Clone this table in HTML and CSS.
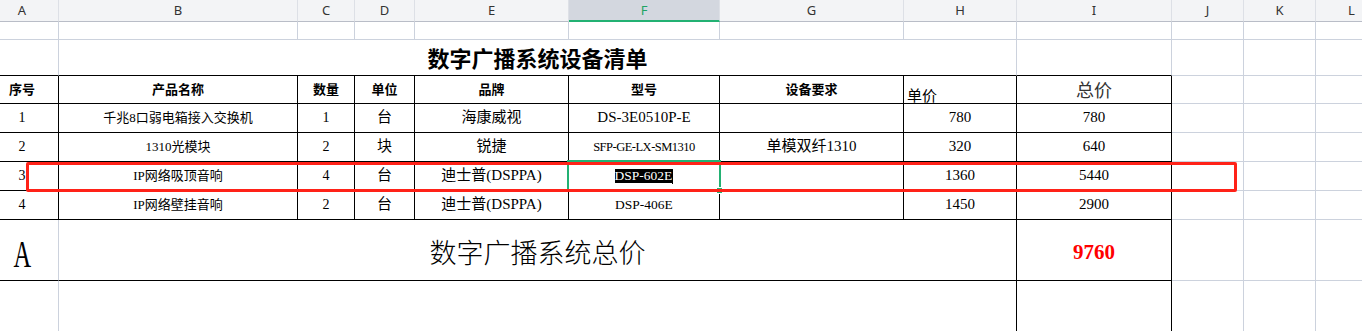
FILE: index.html
```html
<!DOCTYPE html>
<html lang="zh-CN">
<head>
<meta charset="utf-8">
<title>数字广播系统设备清单</title>
<link rel="stylesheet" href="styles.css">
</head>
<body>
<div class="sheet">
  <!-- column headers -->
  <div class="ch">A</div>
  <div class="ch">B</div>
  <div class="ch">C</div>
  <div class="ch">D</div>
  <div class="ch">E</div>
  <div class="ch ch-sel">F</div>
  <div class="ch">G</div>
  <div class="ch">H</div>
  <div class="ch">I</div>
  <div class="ch">J</div>
  <div class="ch">K</div>
  <div class="ch">L</div>

  <!-- row 1 -->
  <div class="c"></div><div class="c"></div><div class="c"></div><div class="c"></div>
  <div class="c"></div><div class="c"></div><div class="c"></div><div class="c"></div>
  <div class="c"></div><div class="c"></div><div class="c"></div><div class="c"></div>

  <!-- row 2: title -->
  <div class="c bb"></div>
  <div class="c bb span7 title">数字广播系统设备清单</div>
  <div class="c bb"></div>
  <div class="c"></div><div class="c"></div><div class="c"></div>

  <!-- row 3: table header -->
  <div class="c b colA th">序号</div>
  <div class="c b th">产品名称</div>
  <div class="c b th">数量</div>
  <div class="c b th">单位</div>
  <div class="c b th">品牌</div>
  <div class="c b th">型号</div>
  <div class="c b th">设备要求</div>
  <div class="c b th-unit">单价</div>
  <div class="c b th-total">总价</div>
  <div class="c"></div><div class="c"></div><div class="c"></div>

  <!-- row 4 -->
  <div class="c b colA f14">1</div>
  <div class="c b f13">千兆8口弱电箱接入交换机</div>
  <div class="c b f14">1</div>
  <div class="c b f15">台</div>
  <div class="c b f15">海康威视</div>
  <div class="c b f15">DS-3E0510P-E</div>
  <div class="c b"></div>
  <div class="c b f15">780</div>
  <div class="c b f15">780</div>
  <div class="c"></div><div class="c"></div><div class="c"></div>

  <!-- row 5 -->
  <div class="c b colA f14">2</div>
  <div class="c b f13">1310光模块</div>
  <div class="c b f14">2</div>
  <div class="c b f15">块</div>
  <div class="c b f15">锐捷</div>
  <div class="c b f-tight">SFP-GE-LX-SM1310</div>
  <div class="c b f15">单模双纤1310</div>
  <div class="c b f15">320</div>
  <div class="c b f15">640</div>
  <div class="c"></div><div class="c"></div><div class="c"></div>

  <!-- row 6 -->
  <div class="c b colA f14">3</div>
  <div class="c b f13">IP网络吸顶音响</div>
  <div class="c b f14">4</div>
  <div class="c b f15">台</div>
  <div class="c b f15">迪士普(DSPPA)</div>
  <div class="c b f135"><span class="hl">DSP-602E</span><span class="caret"></span></div>
  <div class="c b"></div>
  <div class="c b f15">1360</div>
  <div class="c b f15">5440</div>
  <div class="c"></div><div class="c"></div><div class="c"></div>

  <!-- row 7 -->
  <div class="c b colA f14">4</div>
  <div class="c b f13">IP网络壁挂音响</div>
  <div class="c b f14">2</div>
  <div class="c b f15">台</div>
  <div class="c b f15">迪士普(DSPPA)</div>
  <div class="c b f135">DSP-406E</div>
  <div class="c b"></div>
  <div class="c b f15">1450</div>
  <div class="c b f15">2900</div>
  <div class="c"></div><div class="c"></div><div class="c"></div>

  <!-- row 8: total -->
  <div class="c bb colA big-a"><span class="a-glyph">A</span></div>
  <div class="c b span7 total-label">数字广播系统总价</div>
  <div class="c b total-value">9760</div>
  <div class="c"></div><div class="c"></div><div class="c"></div>

  <!-- row 9 -->
  <div class="c"></div>
  <div class="c br span7"></div>
  <div class="c br"></div>
  <div class="c"></div><div class="c"></div><div class="c"></div>

  <!-- overlays -->
  <div class="cell-selection"><span class="fill-handle"></span></div>
  <div class="red-mark"></div>
</div>
</body>
</html>
```

FILE: styles.css
```css
html, body {
  margin: 0;
  padding: 0;
  background: #ffffff;
  overflow: hidden;
}

body {
  width: 1362px;
  height: 331px;
}

.sheet {
  position: relative;
  display: grid;
  grid-template-columns: 59px 239px 57px 60px 154px 151px 184px 113px 155px 72px 72px 72px;
  grid-template-rows: 22px 18px 36px 28px 29px 29px 29px 29px 61px 60px;
  width: 1388px;
  font-family: "Liberation Serif", "Noto Sans CJK SC", serif;
  color: #000;
}

/* column header strip */
.ch {
  box-sizing: border-box;
  background: #f3f4f6;
  border-right: 1px solid #dde0e6;
  border-bottom: 1px solid #b9bdc7;
  display: flex;
  align-items: center;
  justify-content: center;
  font-family: "Noto Sans", "Liberation Sans", sans-serif;
  font-size: 13px;
  color: #333;
  line-height: 1;
}

.ch:first-child {
  padding-right: 14px;
}

.ch-sel {
  background: #d3d7df;
  color: #1fa463;
  border-bottom: 2px solid #23b173;
}

/* grid cells */
.c {
  box-sizing: border-box;
  border-right: 1px solid #ccd2dd;
  border-bottom: 1px solid #ccd2dd;
  display: flex;
  align-items: center;
  justify-content: center;
  white-space: nowrap;
  overflow: hidden;
  line-height: 1.15;
}

.b {
  border-right-color: #000;
  border-bottom-color: #000;
}

.bb {
  border-bottom-color: #000;
}

.br {
  border-right-color: #000;
}

.span7 {
  grid-column: span 7;
}

.colA {
  padding-right: 14px;
}

.f13 { font-size: 13px; }
.f135 { font-size: 13.5px; }
.f14 { font-size: 14px; }
.f15 { font-size: 15px; }
.f-tight { font-size: 12.5px; letter-spacing: -0.5px; }

.title {
  font-family: "Noto Sans CJK SC", sans-serif;
  font-weight: 700;
  font-size: 22px;
  letter-spacing: 0;
}

.th {
  font-family: "Noto Sans CJK SC", sans-serif;
  font-weight: 700;
  font-size: 13px;
}

.th-unit {
  font-family: "Noto Sans CJK SC", sans-serif;
  font-size: 15px;
  justify-content: flex-start;
  align-items: flex-end;
  padding-left: 3px;
  line-height: 16px;
}

.th-total {
  font-family: "Noto Sans CJK SC", sans-serif;
  font-size: 18px;
  font-weight: 400;
  color: #333;
}

/* selected text in editing cell */
.hl {
  background: #000;
  color: #fff;
  line-height: 14px;
  display: inline-block;
}

.caret {
  display: inline-block;
  width: 1px;
  height: 15px;
  background: #000;
}

/* total row */
.big-a {
  padding-top: 8px;
}

.a-glyph {
  display: inline-block;
  font-family: "Liberation Serif", serif;
  font-size: 37px;
  line-height: 1;
  transform: scaleX(0.66);
}

.total-label {
  font-family: "Noto Sans CJK SC", sans-serif;
  font-size: 27px;
  font-weight: 300;
  padding-top: 3px;
}

.total-value {
  font-family: "Liberation Serif", serif;
  font-weight: 700;
  font-size: 21px;
  color: #ff0000;
  padding-top: 4px;
}

/* overlays */
.cell-selection {
  position: absolute;
  left: 567px;
  top: 160px;
  width: 154px;
  height: 32px;
  box-sizing: border-box;
  border: 2px solid #23b173;
  pointer-events: none;
}

.fill-handle {
  position: absolute;
  right: -4px;
  bottom: -4px;
  width: 5px;
  height: 5px;
  background: #23b173;
  border: 1px solid #fff;
}

.red-mark {
  position: absolute;
  left: 26px;
  top: 162px;
  width: 1211px;
  height: 30px;
  box-sizing: border-box;
  border: 3px solid #ff2218;
  border-radius: 2px;
  pointer-events: none;
}
```
